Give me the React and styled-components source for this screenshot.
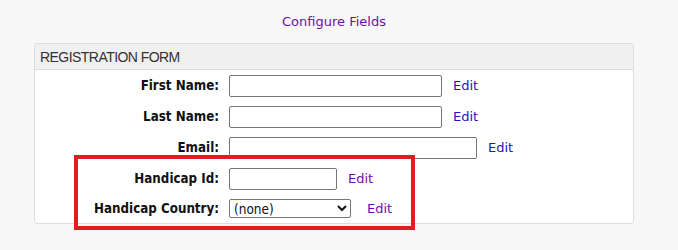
import React from "react";
import styled, { createGlobalStyle } from "styled-components";

const Global = createGlobalStyle`
  html, body { margin: 0; padding: 0; background: #f7f7f7; }
  body { font-family: "DejaVu Sans", sans-serif; }
`;

const Page = styled.div`
  position: relative;
  width: 678px;
  height: 250px;
  padding: 14px 0 0 34px;
  box-sizing: border-box;
`;

const Title = styled.div`
  width: 600px;
  text-align: center;
  font-size: 13px;
  line-height: 16px;
  margin-bottom: 13px;
`;

const Link = styled.a`
  color: ${(p) => (p.$visited ? "#6e0ea6" : "#2a10c4")};
  text-decoration: none;
  font-family: "DejaVu Sans", sans-serif;
  font-size: 13px;
  cursor: pointer;
`;

const Panel = styled.div`
  width: 600px;
  box-sizing: border-box;
  border: 1px solid #dddddd;
  border-radius: 3px;
  background: #ffffff;
  overflow: hidden;
`;

const PanelHeader = styled.div`
  height: 25px;
  background: #f0f0f0;
  border-bottom: 1px solid #dddddd;
  padding-left: 5px;
  display: flex;
  align-items: center;
  font-family: "Liberation Sans", Arial, sans-serif;
  font-size: 14px;
  letter-spacing: -0.55px;
  color: #333333;
`;

const Form = styled.div`
  display: grid;
  grid-template-columns: 184px 1fr;
  grid-template-rows: repeat(4, 31px) 29px;
  column-gap: 10px;
  align-items: center;
`;

const Label = styled.label`
  text-align: right;
  font-family: "DejaVu Sans Condensed", "DejaVu Sans", sans-serif;
  font-weight: bold;
  font-size: 13.25px;
  color: #111111;
`;

const Field = styled.div`
  display: flex;
  align-items: center;
  gap: 11px;
`;

const TextInput = styled.input`
  width: ${(p) => p.$w}px;
  height: 22px;
  box-sizing: border-box;
  border: 1px solid #767676;
  border-radius: 2px;
  padding: 1px 2px;
  margin: 0;
  font-size: 13px;
  background: #fff;
`;

const Select = styled.select`
  width: ${(p) => p.$w}px;
  height: 19px;
  box-sizing: border-box;
  border: 1px solid #767676;
  border-radius: 2px;
  margin: 0 5px 0 0;
  padding: 0;
  font-family: "DejaVu Sans Condensed", "DejaVu Sans", sans-serif;
  font-size: 13.5px;
  color: #111;
  background: #fff;
`;

const Highlight = styled.div`
  position: absolute;
  left: 74px;
  top: 155px;
  width: 341px;
  height: 75px;
  box-sizing: border-box;
  border: 4px solid #e31b23;
  pointer-events: none;
`;

const rows = [
  { label: "First Name:", w: 213 },
  { label: "Last Name:", w: 213 },
  { label: "Email:", w: 248 },
  { label: "Handicap Id:", w: 108, visited: true },
];

export default function App() {
  return (
    <>
      <Global />
      <Page>
        <Title>
          <Link $visited>Configure Fields</Link>
        </Title>
        <Panel>
          <PanelHeader>REGISTRATION FORM</PanelHeader>
          <Form>
            {rows.map((r) => (
              <React.Fragment key={r.label}>
                <Label>{r.label}</Label>
                <Field>
                  <TextInput type="text" $w={r.w} />
                  <Link $visited={r.visited}>Edit</Link>
                </Field>
              </React.Fragment>
            ))}
            <Label>Handicap Country:</Label>
            <Field>
              <Select $w={122} defaultValue="none">
                <option value="none">(none)</option>
              </Select>
              <Link $visited>Edit</Link>
            </Field>
          </Form>
        </Panel>
        <Highlight />
      </Page>
    </>
  );
}
